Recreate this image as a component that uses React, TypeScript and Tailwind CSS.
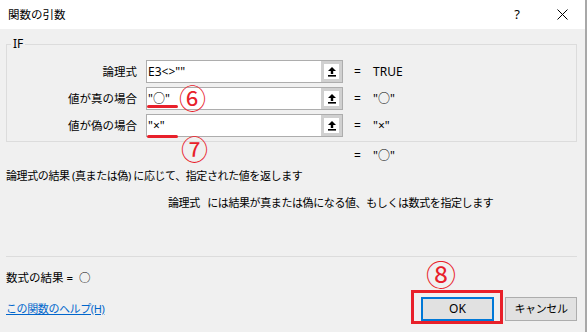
import React from "react"

const font = { fontFamily: '"Noto Sans", "Noto Sans CJK JP", sans-serif' }

function RefButton() {
  return (
    <div className="w-[21px] h-full bg-[#d0d0d0] p-[3px] flex">
      <div className="flex-1 bg-white flex items-center justify-center">
        <svg width="10" height="11" viewBox="0 0 10 11">
          <path d="M5 1 L9 5 L6.2 5 L6.2 8 L3.8 8 L3.8 5 L1 5 Z" fill="#000" />
          <rect x="1" y="9" width="8" height="1.6" fill="#000" />
        </svg>
      </div>
    </div>
  )
}

function ArgRow({
  label,
  value,
  result,
  children,
}: {
  label: string
  value: string
  result: string
  children?: React.ReactNode
}) {
  return (
    <div className="flex items-center h-[23px]">
      <div className="w-[131px] text-right pr-[1px] text-[11.5px]">{label}</div>
      <div className="relative ml-[8px] w-[197px] h-full flex border border-[#adadad] bg-white">
        <div className="flex-1 pl-[1px] leading-[21px]">{value}</div>
        <RefButton />
        {children}
      </div>
      <div className="ml-[11px] w-[19px]">=</div>
      <div>{result}</div>
    </div>
  )
}

const redLine = "absolute left-[0px] w-[31px] h-[3px] rounded-full bg-[#e8202a]"
const circled = "absolute text-[#e8202a] leading-none"
const narrow = "text-[11px] tracking-[-0.4px]"

export default function App() {
  return (
    <div
      className="w-[587px] h-[332px] bg-[#f0f0f0] text-[12px] text-black border-r-2 border-[#a8a8a8] flex flex-col overflow-hidden"
      style={font}
    >
      {/* タイトルバー */}
      <div className="h-[29px] bg-white flex items-center pl-[8px] shrink-0">
        <span className="text-[11.5px]">関数の引数</span>
        <span className="ml-auto mr-[37px] text-[13px]">?</span>
        <svg className="mr-[17px]" width="11" height="11" viewBox="0 0 11 11">
          <path d="M0.5 0.5 L10.5 10.5 M10.5 0.5 L0.5 10.5" stroke="#000" strokeWidth="1" />
        </svg>
      </div>

      {/* 引数グループ */}
      <fieldset className="mt-[7px] ml-[6px] mr-[8px] border border-[#dcdcdc] px-0 pt-[8px] pb-[4px] min-w-0 flex flex-col gap-[4px]">
        <legend className="ml-[4px] px-[2px] leading-[16px]">IF</legend>
        <ArgRow label="論理式" value={'E3<>""'} result="TRUE" />
        <ArgRow label="値が真の場合" value={'"○"'} result={'"○"'}>
          <span className={`${redLine} top-[17px]`} />
          <span className={`${circled} left-[32px] top-[-3px] text-[27px]`}>⑥</span>
        </ArgRow>
        <ArgRow label="値が偽の場合" value={'"×"'} result={'"×"'}>
          <span className={`${redLine} top-[20px]`} />
          <span className={`${circled} left-[34px] top-[21px] text-[27px]`}>⑦</span>
        </ArgRow>
      </fieldset>

      <div className="mt-[4px] h-[20px] flex items-center pl-[354px]">
        <span className="w-[19px]">=</span>
        <span>"○"</span>
      </div>

      <div className={`mt-[2px] h-[16px] leading-[16px] pl-[6px] ${narrow}`}>
        論理式の結果 (真または偽) に応じて、指定された値を返します
      </div>
      <div className={`mt-[11px] h-[16px] leading-[16px] pl-[168px] ${narrow}`}>
        論理式&nbsp;&nbsp;&nbsp;には結果が真または偽になる値、もしくは数式を指定します
      </div>

      <div className="mt-[45px] mx-[6px] mr-[8px] h-px bg-[#dcdcdc]" />

      <div className="mt-[13px] h-[16px] leading-[16px] pl-[6px] text-[11.5px]">数式の結果 =&nbsp;&nbsp;○</div>

      <div className="mt-[11px] h-[24px] flex items-center pl-[6px] pr-[8px]">
        <a className={`text-[#0066cc] underline cursor-pointer ${narrow}`}>この関数のヘルプ(H)</a>
        <div className="ml-auto flex gap-[11px]">
          <div className="relative">
            <button className="w-[73px] h-[24px] bg-[#e1e1e1] border-2 border-[#0078d7]">OK</button>
            <span className="absolute left-[-10px] top-[-7px] w-[92px] h-[34px] border-[3px] border-[#e8202a] pointer-events-none" />
            <span className={`${circled} left-[5px] top-[-37px] text-[30px]`}>⑧</span>
          </div>
          <button className={`w-[72px] h-[24px] bg-[#e1e1e1] border border-[#adadad] ${narrow}`}>キャンセル</button>
        </div>
      </div>
    </div>
  )
}
